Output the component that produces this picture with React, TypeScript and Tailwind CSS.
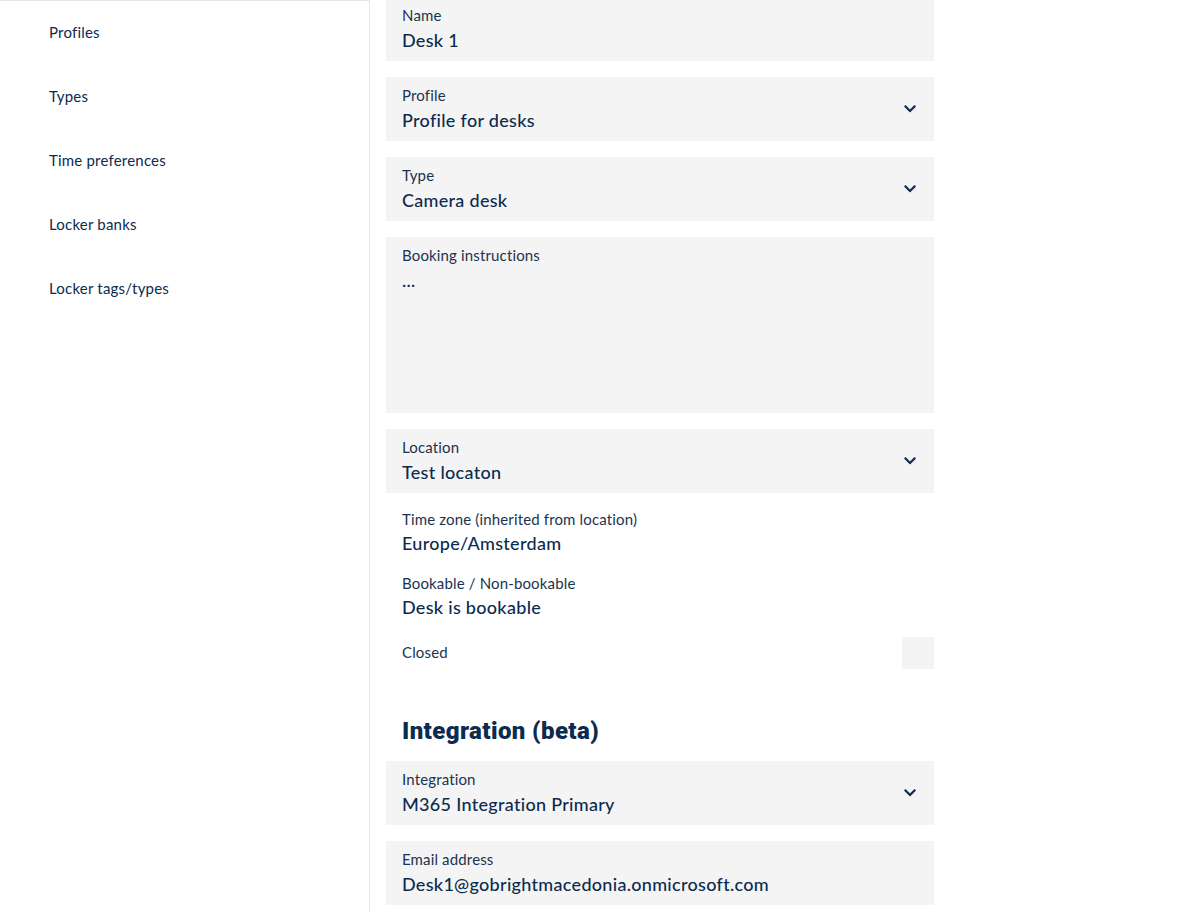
const navItems = ['Profiles', 'Types', 'Time preferences', 'Locker banks', 'Locker tags/types']

function Chevron() {
  return (
    <svg viewBox="0 0 12 8" className="w-3 h-2" fill="none">
      <path d="M1.5 1.5 6 6l4.5-4.5" stroke="#0b2b4f" strokeWidth="2.2" strokeLinecap="square" />
    </svg>
  )
}

function Field({ label, value, select, tall }: { label: string; value: string; select?: boolean; tall?: boolean }) {
  return (
    <div className={`bg-[#f4f4f4] pl-4 pr-[18px] pt-[9px] flex items-start justify-between ${tall ? 'h-[176px]' : 'h-16'}`}>
      <div>
        <div className="text-[15px] leading-[18px] tracking-[0.15px] text-[#1b3350]">{label}</div>
        <div className="text-[18px] leading-[26px] mt-[3px] tracking-[0.3px] font-medium text-[#0b2b4f]">{value}</div>
      </div>
      {select && (
        <div className="self-stretch -mt-[9px] flex items-center">
          <Chevron />
        </div>
      )}
    </div>
  )
}

function Info({ label, value }: { label: string; value: string }) {
  return (
    <div className="px-4">
      <div className="text-[15px] leading-[18px] tracking-[0.15px] text-[#1b3350]">{label}</div>
      <div className="text-[18px] leading-[26px] mt-[2px] tracking-[0.3px] font-medium text-[#0b2b4f]">{value}</div>
    </div>
  )
}

export default function App() {
  return (
    <div className="flex min-h-[912px] bg-white font-['Lato',sans-serif]">
      <aside className="w-[370px] shrink-0 border-t border-r border-[#e6e6e6]">
        <nav className="pt-[21px] pl-[49px]">
          {navItems.map((item) => (
            <div key={item} className="h-16 text-[15px] leading-[20px] tracking-[0.2px] text-[#0b2b4f]">
              {item}
            </div>
          ))}
        </nav>
      </aside>

      <main className="pl-4 w-[564px] -mt-[3px]">
        <div className="flex flex-col gap-4">
          <Field label="Name" value="Desk 1" />
          <Field label="Profile" value="Profile for desks" select />
          <Field label="Type" value="Camera desk" select />
          <Field label="Booking instructions" value="..." tall />
          <Field label="Location" value="Test locaton" select />
        </div>

        <div className="mt-[17px] flex flex-col gap-[18px]">
          <Info label="Time zone (inherited from location)" value="Europe/Amsterdam" />
          <Info label="Bookable / Non-bookable" value="Desk is bookable" />
        </div>

        <div className="mt-[17px] flex items-center justify-between h-8 pl-4">
          <span className="text-[15px] leading-[18px] -mt-[2px] tracking-[0.15px] text-[#1b3350]">Closed</span>
          <div className="w-8 h-8 bg-[#f4f4f4]" />
        </div>

        <h2 className="mt-[46px] px-4 text-[24px] leading-[32px] font-black tracking-[0.4px] text-[#0b2b4f] font-['Roboto',sans-serif]">
          Integration (beta)
        </h2>

        <div className="mt-[14px] flex flex-col gap-4">
          <Field label="Integration" value="M365 Integration Primary" select />
          <Field label="Email address" value="Desk1@gobrightmacedonia.onmicrosoft.com" />
        </div>
      </main>
    </div>
  )
}
